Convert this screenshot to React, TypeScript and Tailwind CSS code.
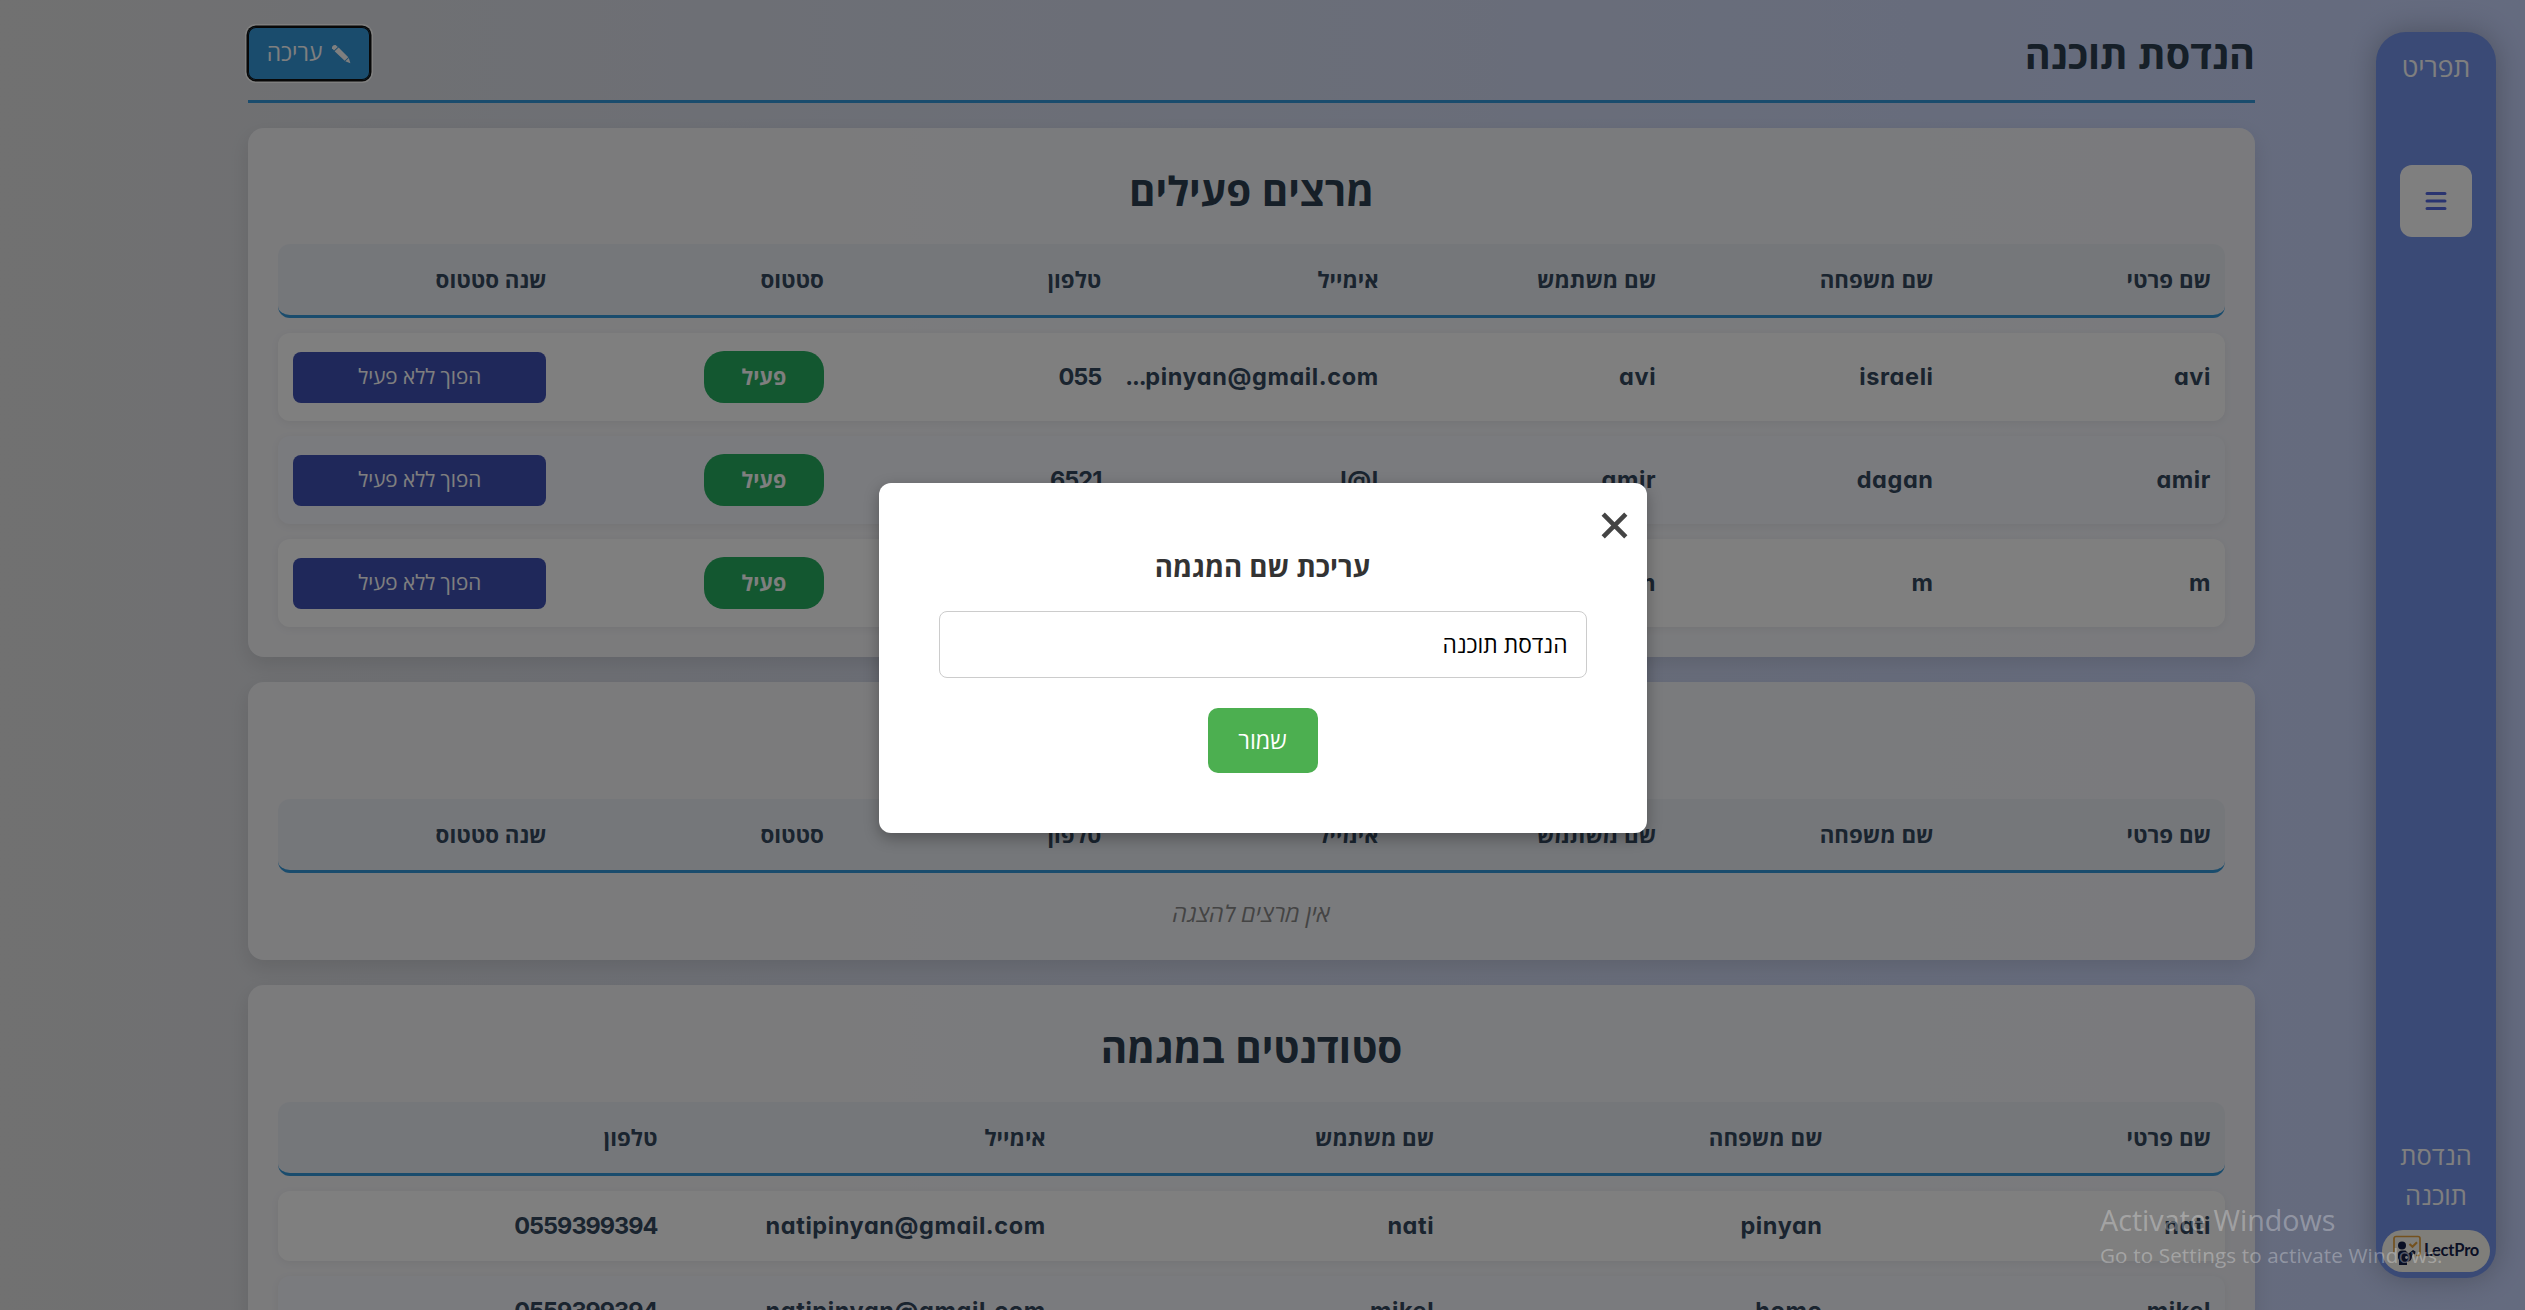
import React from "react";

const lecturerCols = ["שם פרטי", "שם משפחה", "שם משתמש", "אימייל", "טלפון", "סטטוס", "שנה סטטוס"];
const studentCols = ["שם פרטי", "שם משפחה", "שם משתמש", "אימייל", "טלפון"];

const lecturers = [
  ["avi", "israeli", "avi", "...pinyan@gmail.com", "055"],
  ["amir", "dagan", "amir", "l@l", "6521"],
  ["m", "m", "m", "m@m", "054"],
];

const students = [
  ["nati", "pinyan", "nati", "natipinyan@gmail.com", "0559399394"],
  ["mikel", "homo", "mikel", "natipinyan@gmail.com", "0559399394"],
];

function HeadRow({ cols, grid }: { cols: string[]; grid: string }) {
  return (
    <div className={`grid ${grid} h-[74px] shrink-0 items-center gap-6 rounded-xl border-b-[3px] border-[#3498db] bg-[#ebeff5] pl-[15px] pr-[14px] text-[22.3px] font-bold text-[#34495e]`}>
      {cols.map((c) => (
        <div key={c}>{c}</div>
      ))}
    </div>
  );
}

function Cell({ value }: { value: string }) {
  const tracking = /^\d+$/.test(value) ? "tracking-[-1px]" : "tracking-[0.6px]";
  const dots = value.startsWith("...") ? "..." : "";
  return (
    <div className={`${tracking} min-w-0 whitespace-nowrap text-right font-['Inter',sans-serif] text-[23.5px] font-bold text-[#34495e] [font-feature-settings:'cv11']`}>
      <span dir="ltr">
        {dots && <span className="tracking-[-1.2px]">{dots}</span>}
        {value.slice(dots.length)}
      </span>
    </div>
  );
}

function Card({ title, gap, children }: { title: string; gap: string; children: React.ReactNode }) {
  return (
    <section className="flex shrink-0 flex-col rounded-2xl bg-[#f8f8fb]/90 px-[30px] pt-[30px] shadow-[0_8px_20px_rgba(0,0,0,0.1)]">
      <h2 className={`${gap} flex h-[70px] items-center justify-center pb-[4px] text-[40.3px] font-bold text-[#2c3e50]`}>{title}</h2>
      {children}
    </section>
  );
}

function Logo() {
  return (
    <div dir="ltr" className="flex h-[42px] w-[108px] items-center rounded-full bg-[#fffdf4] pb-[2px] pl-[8px]">
      <svg width="32" height="34" viewBox="0 0 32 34" fill="none">
        <path d="M4 19V5.500a2 2 0 0 1 2-2H28a2 2 0 0 1 2 2V20.500a2 2 0 0 1-2 2h-2" stroke="#e8a33d" strokeWidth="1.700" />
        <path d="M19.500 11l3 2.700 4.500-4.500" stroke="#e8a33d" strokeWidth="2.200" />
        <circle cx="12" cy="12.500" r="4" fill="#14204a" />
        <path d="M8 21a4 4 0 0 1 4-3.500h3.500l3 3 4.500-3.500 2.500 1.500-.5 3-1.500-1-1.500 2.500c0 3-1.500 5.500-5 6V32H9V27L8 25z" fill="#14204a" />
        <circle cx="16.500" cy="24.500" r="1.400" fill="#fffdf4" />
      </svg>
      <span className="ml-[2px] font-['Lato',sans-serif] text-[16.5px] font-bold leading-none tracking-[-0.2px] text-[#14204a]">LectPro</span>
    </div>
  );
}

export default function App() {
  return (
    <div dir="rtl" className="relative flex h-[1310px] w-[2525px] overflow-hidden bg-linear-to-r from-[#e2e2e2] to-[#c9d6ff] font-['Open_Sans','Noto_Sans',sans-serif]">
      <aside className="mr-[29px] mt-8 flex h-[1246px] w-[120px] shrink-0 flex-col items-center rounded-[30px] bg-[#7494ec] pb-[6px] text-[26.500px] text-white shadow-[0_0_30px_rgba(0,0,0,0.25)]">
        <div className="mt-[15px] leading-[40px]">תפריט</div>
        <button className="mt-[78px] flex h-[72px] w-[72px] items-center justify-center rounded-xl bg-white">
          <svg width="22" height="20" viewBox="0 0 22 20" stroke="#5468e0" strokeWidth="3" strokeLinecap="round">
            <path d="M2 2.500h18M2 10h18M2 17.500h18" />
          </svg>
        </button>
        <div className="mb-[15px] mt-auto w-[80px] text-center text-[25.500px] leading-[40px]">הנדסת תוכנה</div>
        <Logo />
      </aside>

      <main className="mr-[121px] flex w-[2007px] shrink-0 flex-col">
        <header className="mb-[25px] flex h-[103px] shrink-0 items-center justify-between border-b-[3px] border-[#3498db] pt-[7px]">
          <h1 className="pt-[2px] text-[39.600px] font-bold leading-none text-[#2c3e50]">הנדסת תוכנה</h1>
          <button className="flex h-[53px] w-[122px] items-center justify-center gap-[9px] rounded-lg bg-[#3498db] text-[22.800px] text-white shadow-[inset_0_0_0_1px_#101010,0_0_0_1.500px_#101010,0_0_0_3px_#ffffff]">
            <svg width="20" height="20" viewBox="0 0 20 20" fill="currentColor">
              <path d="M1 4.200C.6 2.500 2.600.6 4.600 1.100L6.800 3 3 6.500z" />
              <path d="M3.600 7.200L7.600 3.500 17.300 13.200l-3.600 3.500z" />
              <path d="M14.300 17.300l3.500-3.300L19.400 19.200z" />
            </svg>
            <span>עריכה</span>
          </button>
        </header>

        <div className="flex flex-col gap-[25px]">
          <Card title="מרצים פעילים" gap="mb-4">
            <HeadRow cols={lecturerCols} grid="grid-cols-7" />
            <div className="mb-[30px] mt-[15px] flex flex-col gap-[15px]">
              {lecturers.map((r, i) => (
                <div key={i} className="grid h-[88px] grid-cols-7 items-center gap-6 rounded-xl bg-white pl-[15px] pr-[14px] shadow-[0_2px_8px_rgba(0,0,0,0.06)] even:bg-[#f5f6fd]">
                  {r.map((v, j) => (
                    <Cell key={j} value={v} />
                  ))}
                  <div className="flex h-[52px] w-[120px] items-center justify-center rounded-[20px] bg-[#27ae60] text-[21.500px] font-bold text-white">פעיל</div>
                  <button className="h-[51px] rounded-lg bg-[#3f51b5] text-[20.700px] text-white">הפוך ללא פעיל</button>
                </div>
              ))}
            </div>
          </Card>

          <Card title="מרצים לא פעילים" gap="mb-[17px]">
            <HeadRow cols={lecturerCols} grid="grid-cols-7" />
            <div className="flex h-[87px] items-center justify-center pb-[6px] text-[23px] italic tracking-[0.3px] text-[#888]">אין מרצים להצגה</div>
          </Card>

          <Card title="סטודנטים במגמה" gap="mb-[17px]">
            <HeadRow cols={studentCols} grid="grid-cols-5" />
            <div className="mb-[30px] mt-[15px] flex flex-col gap-[15px]">
              {students.map((r, i) => (
                <div key={i} className="grid h-[70px] grid-cols-5 items-center gap-6 rounded-xl bg-white pl-[15px] pr-[14px] shadow-[0_2px_8px_rgba(0,0,0,0.06)] even:bg-[#f5f6fd]">
                  {r.map((v, j) => (
                    <Cell key={j} value={v} />
                  ))}
                </div>
              ))}
            </div>
          </Card>
        </div>
      </main>

      <div className="absolute inset-0 flex items-center justify-center bg-black/50 pt-[6px]">
        <div className="relative flex h-[350px] w-[768px] flex-col items-center rounded-xl bg-white px-[60px] pt-[60px] shadow-[0_5px_15px_rgba(0,0,0,0.3)]">
          <button className="absolute right-[19px] top-[29px]">
            <svg width="27" height="27" viewBox="0 0 27 27" stroke="#444" strokeWidth="4.600">
              <path d="M2.200 2.200l22.600 22.600M24.800 2.200L2.200 24.800" />
            </svg>
          </button>
          <h3 className="flex h-12 items-center pb-px text-[27.700px] font-bold text-[#333]">עריכת שם המגמה</h3>
          <input
            className="mt-5 h-[67px] w-full shrink-0 rounded-lg border border-[#ccc] bg-white px-[18px] text-[22.800px] text-black outline-none"
            defaultValue="הנדסת תוכנה"
          />
          <button className="mt-[30px] h-[65px] w-[110px] rounded-[10px] bg-[#4caf50] text-[23.300px] text-white">שמור</button>
        </div>
      </div>

      <div dir="ltr" className="pointer-events-none absolute left-[2100px] top-[1199px] whitespace-nowrap text-white/30">
        <div className="text-[28.700px] leading-[42px]">Activate Windows</div>
        <div className="text-[20.600px] leading-[29px] tracking-[0.15px]">Go to Settings to activate Windows.</div>
      </div>
    </div>
  );
}
